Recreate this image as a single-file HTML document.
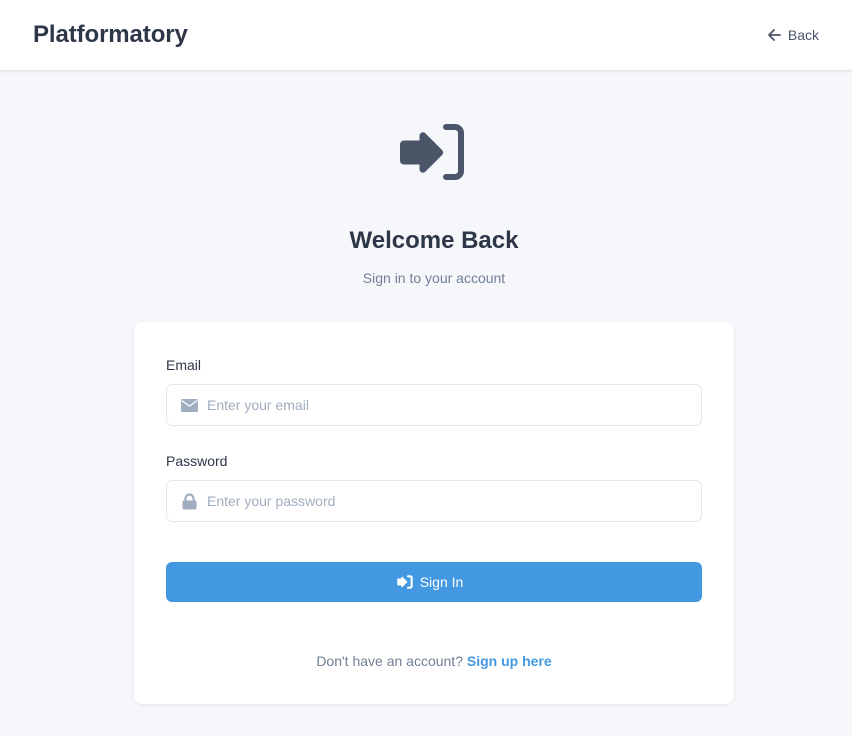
<!DOCTYPE html>
<html><head><meta charset="utf-8"><style>
*{box-sizing:border-box;margin:0;padding:0}
body{width:852px;height:736px;background:#f5f7fa;font-family:"Liberation Sans",sans-serif;position:relative;overflow:hidden;color:#2d3748}
.hdr{position:absolute;left:0;top:0;width:852px;height:70px;background:#fff;box-shadow:0 1px 3px rgba(0,0,0,.12)}
.logo{position:absolute;left:33px;top:21px;font-size:24px;font-weight:bold;color:#2d3748;letter-spacing:-0.1px}
.back{position:absolute;right:33px;top:27px;font-size:14px;color:#4a5568;display:flex;align-items:center;gap:7px}
.icon{position:absolute;left:399px;top:122px}
h1{position:absolute;left:16px;width:836px;top:227px;text-align:center;font-size:24px;font-weight:bold;color:#2d3748}
.sub{position:absolute;left:16px;width:836px;top:270px;text-align:center;font-size:14px;color:#718096}
.card{position:absolute;left:134px;top:322px;width:600px;height:382px;background:#fff;border-radius:8px;box-shadow:0 1px 3px rgba(0,0,0,.08)}
.lbl{position:absolute;left:32px;font-size:14px;color:#2d3748}
.inp{position:absolute;left:32px;width:536px;height:42px;border:1px solid #e2e8f0;border-radius:6px;font-size:14px;color:#a0aec0;display:flex;align-items:center;padding-left:14px;gap:9px}
.btn{position:absolute;left:32px;top:240px;width:536px;height:40px;background:#4299e1;border-radius:6px;color:#fff;font-size:14px;display:flex;align-items:center;justify-content:center;gap:7px;padding-right:8px}
.foot{position:absolute;left:0;width:600px;top:331px;text-align:center;font-size:14px;color:#718096}
.foot b{color:#4299e1}
</style></head><body>
<div class="hdr"><div class="logo">Platformatory</div>
<div class="back"><svg width="13" height="12" viewBox="0 0 13 12"><path d="M6 1L1 6l5 5M1 6h11" stroke="#4a5568" stroke-width="1.8" fill="none" stroke-linecap="round" stroke-linejoin="round"/></svg>Back</div></div>
<svg class="icon" width="70" height="60" viewBox="0 0 70 60"><path d="M5 20h17v-6c0-2 2-3 3.5-1.5L42 29c1 1 1 2 0 3L25.5 48.5C24 50 22 49 22 47v-6H5c-1.5 0-2.5-1-2.5-2.5v-16C2.5 21 3.5 20 5 20z" fill="#4a5568" stroke="#4a5568" stroke-width="3" stroke-linejoin="round"/><path d="M47 5h9a6 6 0 0 1 6 6v38a6 6 0 0 1-6 6h-9" fill="none" stroke="#4a5568" stroke-width="6" stroke-linecap="round"/></svg>
<h1>Welcome Back</h1>
<div class="sub">Sign in to your account</div>
<div class="card">
<div class="lbl" style="top:35px">Email</div>
<div class="inp" style="top:62px"><svg width="17" height="13" viewBox="0 0 17 13"><rect x="0" y="0" width="17" height="13" rx="1.5" fill="#a0aec0"/><path d="M0.5 1.5l8 5.5 8-5.5" stroke="#fff" stroke-width="1.3" fill="none"/></svg>Enter your email</div>
<div class="lbl" style="top:131px">Password</div>
<div class="inp" style="top:158px"><svg width="17" height="17" viewBox="0 0 17 17"><path d="M4.5 8V5.5a4 4 0 0 1 8 0V8" stroke="#a0aec0" stroke-width="2.2" fill="none"/><rect x="1.5" y="7.5" width="14" height="9" rx="1.5" fill="#a0aec0"/></svg>Enter your password</div>
<div class="btn"><svg width="16" height="14" viewBox="0 0 70 60"><path d="M4 18h18V10l20 20-20 20v-8H4z" fill="#fff" stroke="#fff" stroke-width="6" stroke-linejoin="round"/><path d="M48 5h10a6 6 0 0 1 6 6v38a6 6 0 0 1-6 6H48" fill="none" stroke="#fff" stroke-width="9" stroke-linecap="round"/></svg>Sign In</div>
<div class="foot">Don't have an account? <b>Sign up here</b></div>
</div>
</body></html>
